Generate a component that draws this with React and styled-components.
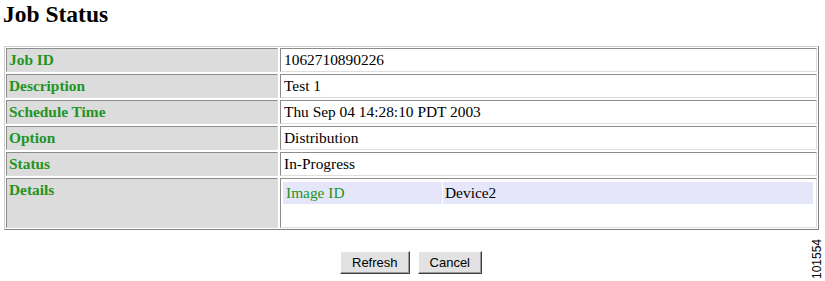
import React from "react";
import styled, { createGlobalStyle } from "styled-components";

const Global = createGlobalStyle`
  html, body { margin: 0; padding: 0; background: #ffffff; }
  body { font-family: "Liberation Serif", "Times New Roman", serif; }
`;

const Page = styled.div`
  position: relative;
  width: 825px;
  height: 281px;
  overflow: hidden;
  background: #ffffff;
`;

const Title = styled.h1`
  margin: 0;
  padding: 1px 0 0 3px;
  font-family: "Liberation Serif", "Times New Roman", serif;
  font-size: 23.5px;
  line-height: 26px;
  font-weight: bold;
  color: #000000;
`;

const InfoGrid = styled.div`
  box-sizing: border-box;
  margin: 19px 0 0 4px;
  width: 815px;
  border: 1px solid;
  border-color: #cfcfcf #808080 #808080 #cfcfcf;
  padding: 1px;
  display: grid;
  grid-template-columns: 272px 1fr;
  grid-template-rows: repeat(5, 24px) 50px;
  gap: 2px;
`;

const Cell = styled.div`
  box-sizing: border-box;
  border: 1px solid;
  border-color: #8c8c8c #dedede #dedede #8c8c8c;
  padding: ${(p) => (p.$pad ? p.$pad : "1px 2px")};
  font-family: "Liberation Serif", "Times New Roman", serif;
  font-size: 15.4px;
  line-height: 20px;
  white-space: nowrap;
`;

const LabelCell = styled(Cell)`
  background: #dcdcdc;
  color: #229422;
  font-weight: bold;
`;

const ValueCell = styled(Cell)`
  background: #ffffff;
  color: #000000;
`;

const DetailRow = styled.div`
  display: grid;
  grid-template-columns: 159px 1fr;
  gap: 1px;
`;

const DetailCell = styled.div`
  background: #e6e6fa;
  padding: 1px 2px 1px ${(p) => (p.$key ? "3px" : "2px")};
  line-height: 20px;
  font-size: 15.4px;
  color: ${(p) => (p.$key ? "#229422" : "#000000")};
`;

const Footer = styled.div`
  display: flex;
  justify-content: center;
  gap: 8px;
  margin-top: 21px;
  padding-right: 3px;
`;

const Button = styled.button`
  box-sizing: border-box;
  height: 23px;
  padding: 0 11px;
  margin: 0;
  font-family: "Liberation Sans", Arial, sans-serif;
  font-size: 13px;
  line-height: 21px;
  color: #000000;
  background: #e2e2e2;
  border: 1px solid;
  border-color: #ffffff #404040 #404040 #ffffff;
  box-shadow: inset -1px -1px 0 #9a9a9a;
  border-radius: 0;
  cursor: default;
`;

const FigureId = styled.div`
  position: absolute;
  right: 2px;
  bottom: 2px;
  writing-mode: vertical-rl;
  transform: rotate(180deg);
  font-family: "Liberation Sans", Arial, sans-serif;
  font-size: 12px;
  line-height: 11px;
  color: #000000;
`;

const rows = [
  ["Job ID", "1062710890226"],
  ["Description", "Test 1"],
  ["Schedule Time", "Thu Sep 04 14:28:10 PDT 2003"],
  ["Option", "Distribution"],
  ["Status", "In-Progress"],
];

export default function App() {
  return (
    <Page>
      <Global />
      <Title>Job Status</Title>
      <InfoGrid>
        {rows.map(([label, value]) => (
          <React.Fragment key={label}>
            <LabelCell>{label}</LabelCell>
            <ValueCell $pad="1px 3px">{value}</ValueCell>
          </React.Fragment>
        ))}
        <LabelCell>Details</LabelCell>
        <ValueCell $pad="3px 3px 0 2px">
          <DetailRow>
            <DetailCell $key>Image ID</DetailCell>
            <DetailCell>Device2</DetailCell>
          </DetailRow>
        </ValueCell>
      </InfoGrid>
      <Footer>
        <Button>Refresh</Button>
        <Button>Cancel</Button>
      </Footer>
      <FigureId>101554</FigureId>
    </Page>
  );
}
